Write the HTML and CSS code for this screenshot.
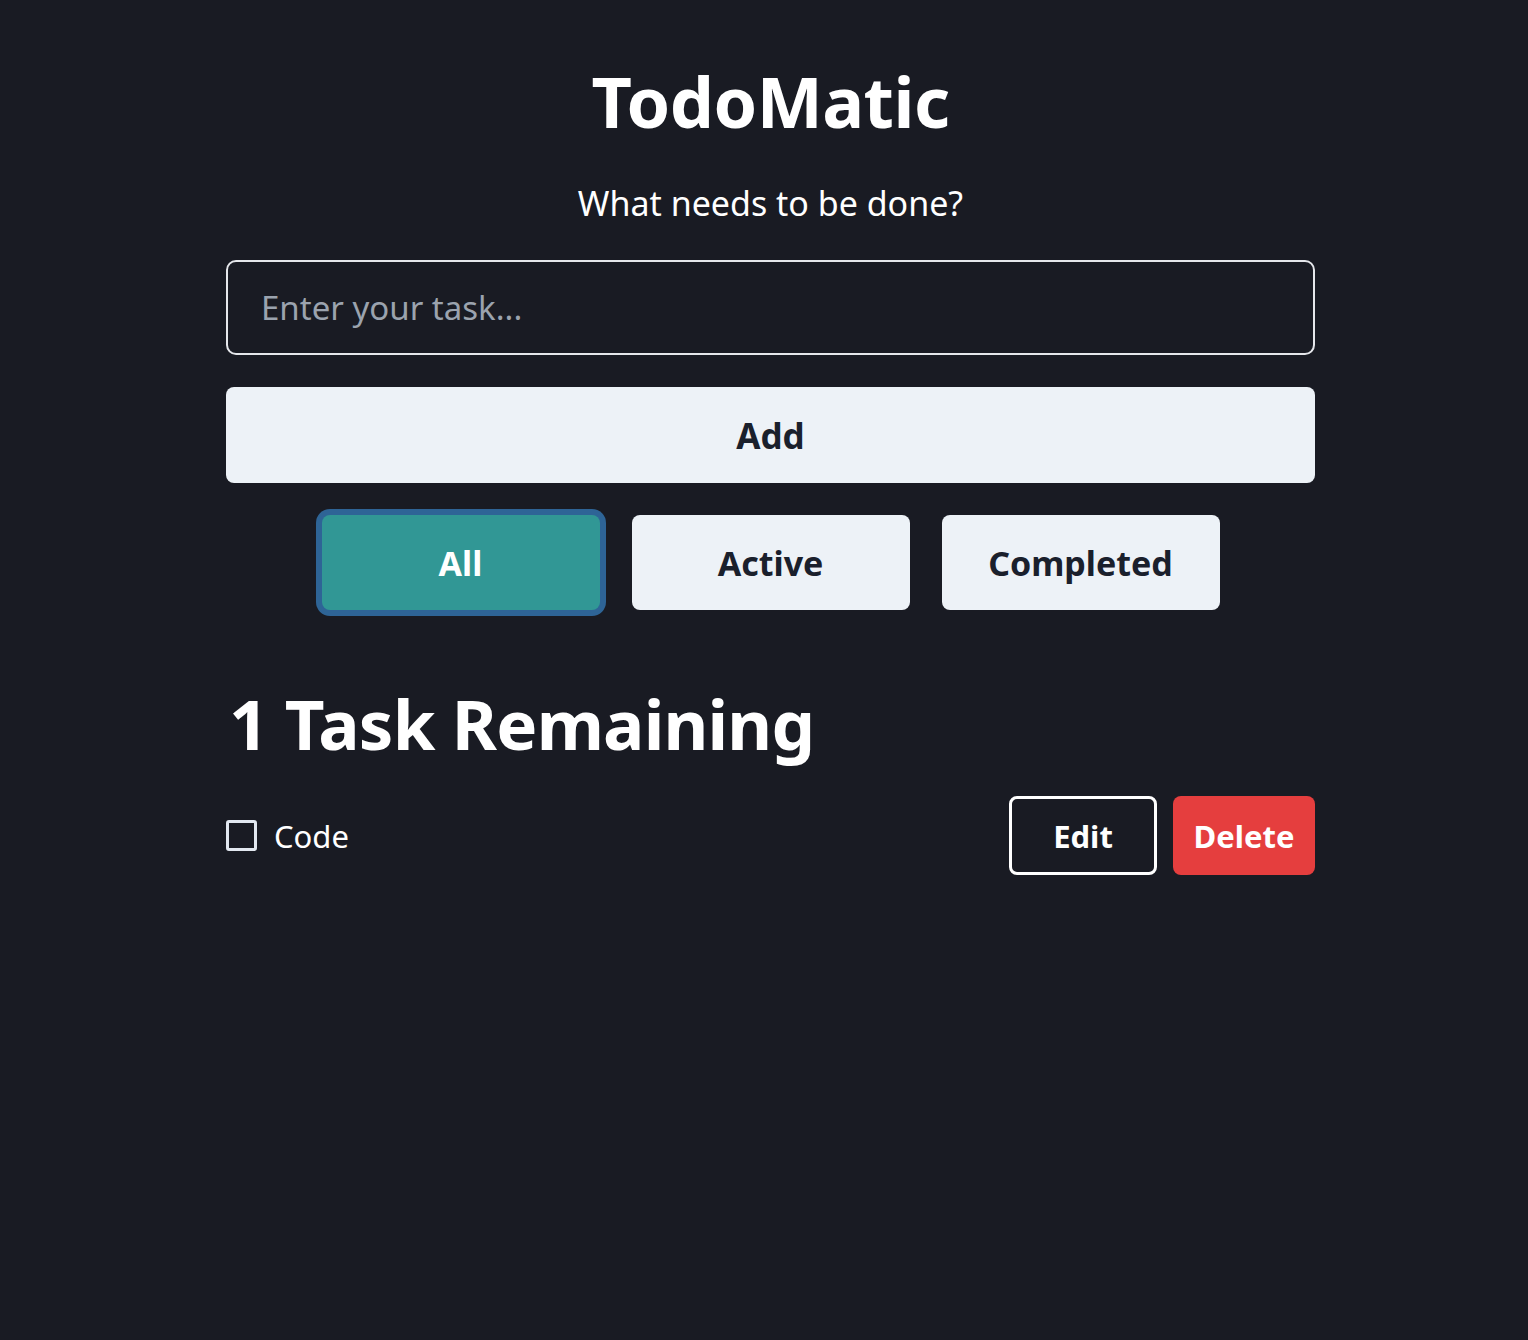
FILE: index.html
```html
<!DOCTYPE html>
<html lang="en">
<head>
<meta charset="utf-8">
<title>TodoMatic</title>
<link rel="stylesheet" href="styles.css">
</head>
<body>
<div class="app">
  <h1 class="title">TodoMatic</h1>
  <form class="new-task">
    <label class="prompt" for="new-todo">What needs to be done?</label>
    <input id="new-todo" class="task-input" type="text" placeholder="Enter your task...">
    <button type="button" class="btn btn-light btn-add">Add</button>
  </form>
  <div class="filters">
    <button type="button" class="btn btn-filter is-active">All</button>
    <button type="button" class="btn btn-filter btn-light">Active</button>
    <button type="button" class="btn btn-filter btn-light">Completed</button>
  </div>
  <h2 class="remaining">1 Task Remaining</h2>
  <ul class="todo-list">
    <li class="todo">
      <label class="todo-label"><span class="checkbox"></span><span class="todo-name">Code</span></label>
      <div class="todo-actions">
        <button type="button" class="btn btn-edit">Edit</button>
        <button type="button" class="btn btn-delete">Delete</button>
      </div>
    </li>
  </ul>
</div>
</body>
</html>
```
FILE: styles.css
```css
* { box-sizing: border-box; }
html, body { margin: 0; padding: 0; }
body {
  background: #191b23;
  color: #ffffff;
  font-family: "Noto Sans", "Open Sans", sans-serif;
  min-height: 1340px;
}
.app {
  width: 1089px;
  margin-left: 226px;
  padding-top: 56px;
  display: flex;
  flex-direction: column;
}
.title {
  margin: 0;
  font-size: 70px;
  line-height: 91px;
  font-weight: 700;
  text-align: center;
  letter-spacing: -0.5px;
}
.new-task {
  display: flex;
  flex-direction: column;
  margin: 0;
}
.prompt {
  display: block;
  text-align: center;
  font-size: 34px;
  line-height: 40px;
  margin-top: 36px;
  margin-bottom: 37px;
}
.task-input {
  height: 95px;
  border: 2px solid #e5e7eb;
  border-radius: 10px;
  background: transparent;
  color: #fff;
  padding: 0 33px;
  font-family: inherit;
  font-size: 33px;
  outline: none;
}
.task-input::placeholder { color: #9ba3ae; }
.btn {
  font-family: inherit;
  font-weight: 700;
  border: none;
  cursor: pointer;
  border-radius: 8px;
}
.btn-light { background: #edf2f7; color: #1a202c; }
.btn-add {
  margin-top: 32px;
  height: 96px;
  font-size: 35px;
}
.filters {
  display: flex;
  justify-content: center;
  gap: 32px;
  margin-top: 32px;
}
.btn-filter {
  width: 278px;
  height: 95px;
  font-size: 34px;
}
.btn-filter.is-active {
  background: #319795;
  color: #fff;
  box-shadow: 0 0 0 6px #2e6496;
}
.remaining {
  margin: 68px 0 0;
  font-size: 69px;
  line-height: 90px;
  font-weight: 700;
  padding-left: 3px;
  letter-spacing: -0.8px;
}
.todo-list { list-style: none; margin: 28px 0 0; padding: 0; }
.todo {
  display: flex;
  align-items: center;
  justify-content: space-between;
}
.todo-label { display: flex; align-items: center; gap: 17px; }
.checkbox {
  width: 31px;
  height: 31px;
  border: 3px solid #e2e8f0;
  border-radius: 3px;
}
.todo-name { font-size: 31px; }
.todo-actions { display: flex; gap: 16px; }
.btn-edit {
  width: 148px;
  height: 79px;
  background: transparent;
  border: 3px solid #ffffff;
  color: #fff;
  font-size: 31px;
}
.btn-delete {
  width: 142px;
  height: 79px;
  background: #e53e3e;
  color: #fff;
  font-size: 31px;
}
```
